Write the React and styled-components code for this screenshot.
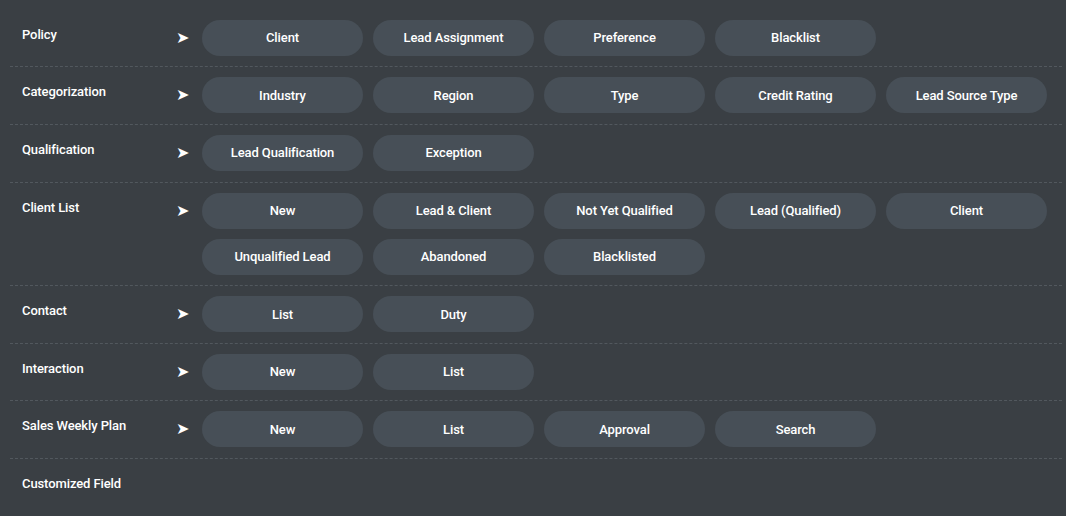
import * as React from 'react'
import styled, { createGlobalStyle } from 'styled-components'

const GlobalStyle = createGlobalStyle`
  html, body {
    margin: 0;
    padding: 0;
    background: #3a3f44;
  }
  body {
    font-family: Roboto, "Liberation Sans", Arial, sans-serif;
  }
`

const Page = styled.div`
  background: #3a3f44;
  min-height: 516px;
  padding: 9.6px 4px 0 10px;
  box-sizing: border-box;
`

const Row = styled.div`
  display: grid;
  grid-template-columns: 154px 26px 1fr;
  padding: 10px 0 10.65px 12px;
  border-bottom: ${p => (p.last ? 'none' : '1px dashed #52585e')};
`

const Label = styled.div`
  color: #fff;
  font-size: 13px;
  font-weight: 500;
  line-height: 20px;
  padding-top: 5px;
  letter-spacing: -0.1px;
`

const Arrow = styled.div`
  color: #fff;
  font-size: 16px;
  line-height: 35px;
  font-family: "DejaVu Sans", sans-serif;
`

const Buttons = styled.div`
  display: flex;
  flex-wrap: wrap;
  gap: 10px 10px;
  width: 860px;
`

const Pill = styled.button`
  width: 161px;
  height: 36px;
  border: none;
  border-radius: 18px;
  background: #474f57;
  color: #fff;
  font-family: Roboto, "Liberation Sans", Arial, sans-serif;
  font-size: 13px;
  font-weight: 500;
  letter-spacing: -0.1px;
  padding: 0;
  cursor: pointer;
`

const menu = [
  { title: 'Policy', items: ['Client', 'Lead Assignment', 'Preference', 'Blacklist'] },
  { title: 'Categorization', items: ['Industry', 'Region', 'Type', 'Credit Rating', 'Lead Source Type'] },
  { title: 'Qualification', items: ['Lead Qualification', 'Exception'] },
  {
    title: 'Client List',
    items: ['New', 'Lead & Client', 'Not Yet Qualified', 'Lead (Qualified)', 'Client', 'Unqualified Lead', 'Abandoned', 'Blacklisted'],
  },
  { title: 'Contact', items: ['List', 'Duty'] },
  { title: 'Interaction', items: ['New', 'List'] },
  { title: 'Sales Weekly Plan', items: ['New', 'List', 'Approval', 'Search'] },
  { title: 'Customized Field', items: [] },
]

export default function App() {
  return (
    <>
      <GlobalStyle />
      <Page>
        {menu.map((section, i) => (
          <Row key={section.title} last={i === menu.length - 1}>
            <Label>{section.title}</Label>
            <Arrow>{section.items.length ? '➤' : ''}</Arrow>
            <Buttons>
              {section.items.map(item => (
                <Pill key={item}>{item}</Pill>
              ))}
            </Buttons>
          </Row>
        ))}
      </Page>
    </>
  )
}
